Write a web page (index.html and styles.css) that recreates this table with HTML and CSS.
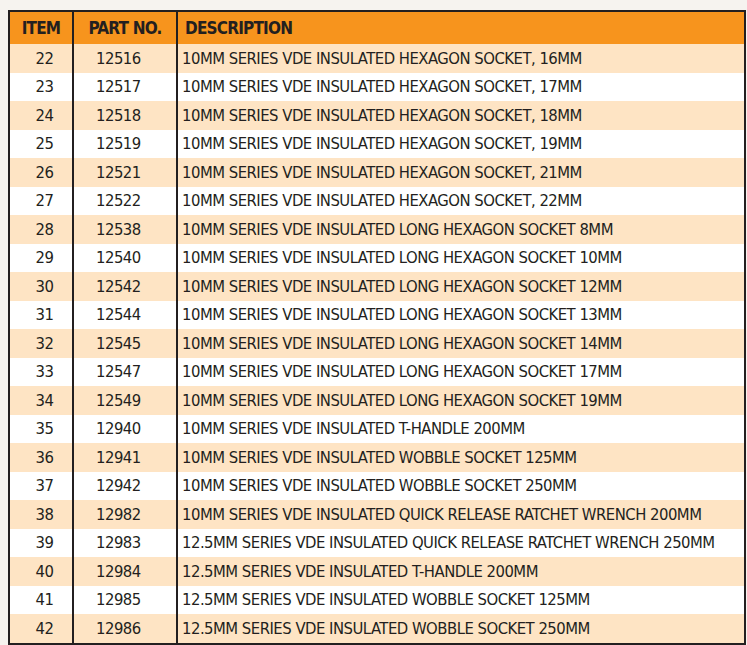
FILE: index.html
```html
<!DOCTYPE html>
<html>
<head>
<meta charset="utf-8">
<link rel="stylesheet" href="styles.css">
</head>
<body>
<div class="page">
<table class="parts">
<thead>
<tr><th class="c-item">ITEM</th><th class="c-part">PART NO.</th><th class="c-desc">DESCRIPTION</th></tr>
</thead>
<tbody>
<tr><td class="c-item">22</td><td class="c-part">12516</td><td class="c-desc">10MM SERIES VDE INSULATED HEXAGON SOCKET, 16MM</td></tr>
<tr><td class="c-item">23</td><td class="c-part">12517</td><td class="c-desc">10MM SERIES VDE INSULATED HEXAGON SOCKET, 17MM</td></tr>
<tr><td class="c-item">24</td><td class="c-part">12518</td><td class="c-desc">10MM SERIES VDE INSULATED HEXAGON SOCKET, 18MM</td></tr>
<tr><td class="c-item">25</td><td class="c-part">12519</td><td class="c-desc">10MM SERIES VDE INSULATED HEXAGON SOCKET, 19MM</td></tr>
<tr><td class="c-item">26</td><td class="c-part">12521</td><td class="c-desc">10MM SERIES VDE INSULATED HEXAGON SOCKET, 21MM</td></tr>
<tr><td class="c-item">27</td><td class="c-part">12522</td><td class="c-desc">10MM SERIES VDE INSULATED HEXAGON SOCKET, 22MM</td></tr>
<tr><td class="c-item">28</td><td class="c-part">12538</td><td class="c-desc">10MM SERIES VDE INSULATED LONG HEXAGON SOCKET 8MM</td></tr>
<tr><td class="c-item">29</td><td class="c-part">12540</td><td class="c-desc">10MM SERIES VDE INSULATED LONG HEXAGON SOCKET 10MM</td></tr>
<tr><td class="c-item">30</td><td class="c-part">12542</td><td class="c-desc">10MM SERIES VDE INSULATED LONG HEXAGON SOCKET 12MM</td></tr>
<tr><td class="c-item">31</td><td class="c-part">12544</td><td class="c-desc">10MM SERIES VDE INSULATED LONG HEXAGON SOCKET 13MM</td></tr>
<tr><td class="c-item">32</td><td class="c-part">12545</td><td class="c-desc">10MM SERIES VDE INSULATED LONG HEXAGON SOCKET 14MM</td></tr>
<tr><td class="c-item">33</td><td class="c-part">12547</td><td class="c-desc">10MM SERIES VDE INSULATED LONG HEXAGON SOCKET 17MM</td></tr>
<tr><td class="c-item">34</td><td class="c-part">12549</td><td class="c-desc">10MM SERIES VDE INSULATED LONG HEXAGON SOCKET 19MM</td></tr>
<tr><td class="c-item">35</td><td class="c-part">12940</td><td class="c-desc">10MM SERIES VDE INSULATED T-HANDLE 200MM</td></tr>
<tr><td class="c-item">36</td><td class="c-part">12941</td><td class="c-desc">10MM SERIES VDE INSULATED WOBBLE SOCKET 125MM</td></tr>
<tr><td class="c-item">37</td><td class="c-part">12942</td><td class="c-desc">10MM SERIES VDE INSULATED WOBBLE SOCKET 250MM</td></tr>
<tr><td class="c-item">38</td><td class="c-part">12982</td><td class="c-desc">10MM SERIES VDE INSULATED QUICK RELEASE RATCHET WRENCH 200MM</td></tr>
<tr><td class="c-item">39</td><td class="c-part">12983</td><td class="c-desc">12.5MM SERIES VDE INSULATED QUICK RELEASE RATCHET WRENCH 250MM</td></tr>
<tr><td class="c-item">40</td><td class="c-part">12984</td><td class="c-desc">12.5MM SERIES VDE INSULATED T-HANDLE 200MM</td></tr>
<tr><td class="c-item">41</td><td class="c-part">12985</td><td class="c-desc">12.5MM SERIES VDE INSULATED WOBBLE SOCKET 125MM</td></tr>
<tr><td class="c-item">42</td><td class="c-part">12986</td><td class="c-desc">12.5MM SERIES VDE INSULATED WOBBLE SOCKET 250MM</td></tr>
</tbody>
</table>
</div>
</body>
</html>
```
FILE: styles.css
```css
html, body {
  margin: 0;
  padding: 0;
  background: #f6f3ef;
}
.page {
  padding: 10px 0 0 8px;
  width: 738px;
}
.parts {
  width: 738px;
  border-collapse: collapse;
  border: 2px solid #231f20;
  font-family: "DejaVu Sans Condensed", "DejaVu Sans", sans-serif;
  color: #231f20;
  table-layout: fixed;
}
.parts th, .parts td {
  border-left: 2px solid #231f20;
  border-right: 2px solid #231f20;
  padding: 0;
  white-space: nowrap;
}
.parts th {
  background: #f7941d;
  height: 31px;
  font-size: 17px;
  letter-spacing: -0.8px;
  font-weight: bold;
  border-bottom: 1px solid #f7941d;
}
.parts td {
  height: 28.5px;
  font-size: 16.5px;
  letter-spacing: -0.5px;
}
.parts tbody tr:nth-child(odd) td {
  background: #fee4c4;
}
.parts tbody tr:nth-child(even) td {
  background: #ffffff;
}
.c-item {
  width: 62px;
  text-align: center;
}
.parts td.c-item {
  padding-left: 7px;
}
.c-part {
  width: 102px;
  text-align: center;
}
.parts td.c-part {
  text-align: left;
  padding-left: 22px;
}
.c-desc {
  text-align: left;
}
.parts th.c-desc {
  padding-left: 7px;
}
.parts td.c-desc {
  padding-left: 4px;
}
```
